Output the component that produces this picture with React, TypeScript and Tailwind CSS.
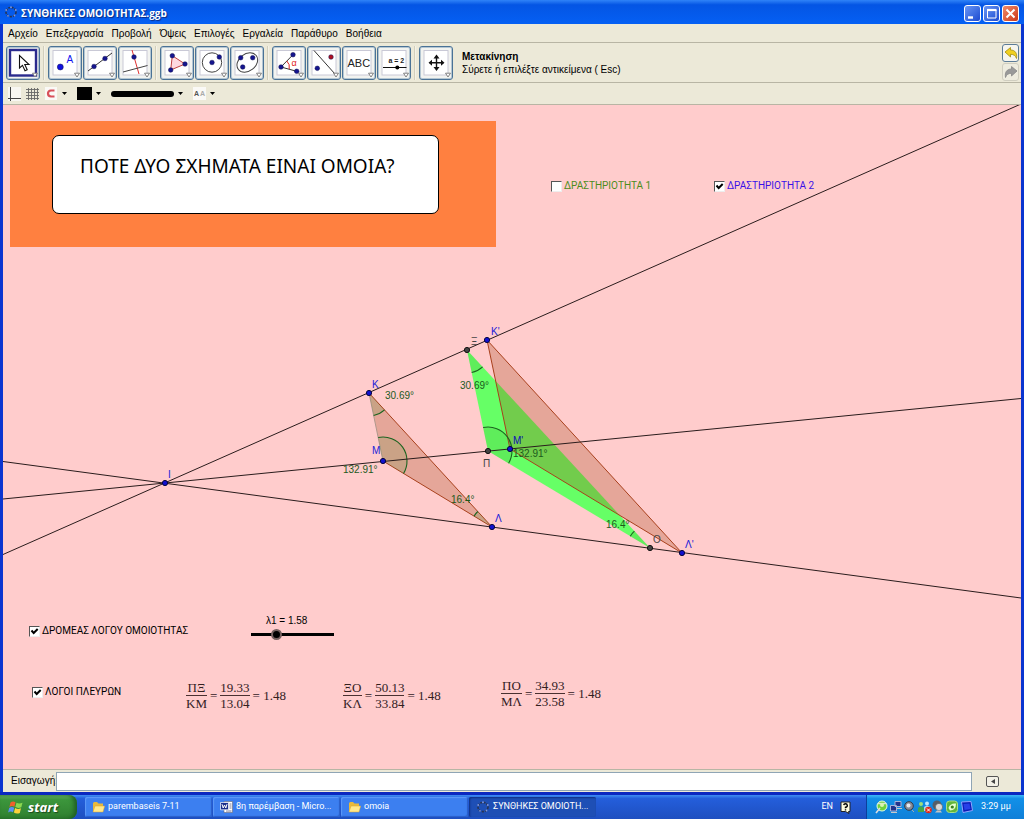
import React, { useState } from "react";

type P = [number, number];

const NAVY = "#15158f";
const BROWN = "#993300";

/* ---------- toolbar ---------- */

function Dot({ x, y, r = 2.3, c = NAVY }: { x: number; y: number; r?: number; c?: string }) {
  return <circle cx={x} cy={y} r={r} fill={c} stroke="#101050" strokeWidth="0.5" />;
}

const toolGroups: { name: string; icon: React.ReactNode }[][] = [
  [
    {
      name: "Μετακίνηση",
      icon: (
        <path
          d="M13.5 9.5V22l3-2.7 2.5 5.4 2.2-1-2.4-5.2h4.2z"
          fill="#fff"
          stroke="#111"
          strokeWidth="1.1"
        />
      ),
    },
  ],
  [
    {
      name: "Σημείο",
      icon: (
        <>
          <Dot x={12.3} y={21} r={3} c="#1010e0" />
          <text x="18.5" y="16.5" fontSize="10" fill="#1010f0">A</text>
        </>
      ),
    },
    {
      name: "Ευθεία",
      icon: (
        <>
          <path d="M5 25 29 7" stroke="#333" />
          <Dot x={11} y={20.5} />
          <Dot x={22} y={12.5} />
        </>
      ),
    },
    {
      name: "Κάθετη ευθεία",
      icon: (
        <>
          <path d="M14 4 21 28" stroke="#e03030" />
          <path d="M5 26 29.5 19.5" stroke="#444" />
          <Dot x={16} y={11} />
        </>
      ),
    },
  ],
  [
    {
      name: "Πολύγωνο",
      icon: (
        <>
          <path d="M12.3 9.7 25 18 10.7 24z" fill="#ffd8e0" stroke="#c04040" />
          <Dot x={12.3} y={9.7} />
          <Dot x={25} y={18} />
          <Dot x={10.7} y={24} />
        </>
      ),
    },
    {
      name: "Κύκλος",
      icon: (
        <>
          <circle cx="17" cy="16.5" r="9.7" fill="none" stroke="#444" />
          <Dot x={17} y={16.5} />
          <Dot x={24.3} y={11} />
        </>
      ),
    },
    {
      name: "Έλλειψη",
      icon: (
        <>
          <ellipse cx="17.3" cy="16.5" rx="11.3" ry="8.5" fill="none" stroke="#444" transform="rotate(-38 17.3 16.5)" />
          <Dot x={10.7} y={11.7} />
          <Dot x={22.7} y={11.7} />
          <Dot x={12.7} y={21} />
        </>
      ),
    },
  ],
  [
    {
      name: "Γωνία",
      icon: (
        <>
          <path d="M21 8.7 9 21 24.7 25.3" fill="none" stroke="#333" />
          <path d="M14.8 15A8.5 8.5 0 0 1 17.2 23" fill="none" stroke="#e02020" />
          <text x="19.5" y="19.5" fontSize="9" fill="#e02020">α</text>
          <Dot x={21} y={8.7} />
          <Dot x={9} y={21} />
          <Dot x={24.7} y={25.3} />
        </>
      ),
    },
    {
      name: "Ανάκλαση",
      icon: (
        <>
          <path d="M7 4.5 28 28" stroke="#333" />
          <Dot x={10.3} y={22.3} />
          <Dot x={24} y={11} c="#b01020" />
        </>
      ),
    },
    { name: "Κείμενο", icon: <text x="5.5" y="20.5" fontSize="11" fill="#222">ABC</text> },
    {
      name: "Δρομέας",
      icon: (
        <>
          <text x="11.5" y="17" fontSize="7" fontWeight="bold" fill="#222">a = 2</text>
          <path d="M6 21.5H29.5" stroke="#111" />
          <circle cx="20.3" cy="21.5" r="2" fill="#000" />
        </>
      ),
    },
  ],
  [
    {
      name: "Μετακίνηση σχεδίου",
      icon: (
        <>
          <path d="M17.5 10.5V23M11 16.7H24" stroke="#111" strokeWidth="1.4" />
          <path d="M17.5 8.5 14.5 12.5H20.5zM17.5 25 14.5 21H20.5zM9.5 16.7 13 13.7V19.7zM25.5 16.7 22 13.7V19.7z" fill="#111" />
        </>
      ),
    },
  ],
];

function ToolButton({ name, icon, active }: { name: string; icon: React.ReactNode; active: boolean }) {
  return (
    <button
      aria-label={name}
      aria-pressed={active}
      className="h-[34px] w-[34px] shrink-0 overflow-hidden rounded-[3px] border border-[#4a7296] bg-[#f2f3f0] shadow-[inset_0_0_0_1px_#b4c6d2]"
    >
      <svg viewBox="0 0 34 33" className="-m-px h-[33px] w-[34px] font-['Liberation_Sans',sans-serif]">
        <rect
          x={active ? 4 : 5}
          y={active ? 4 : 4.5}
          width={active ? 26 : 24}
          height={active ? 25.5 : 24.5}
          fill="#fff"
          stroke={active ? "#2b2b8e" : "#c9c9d6"}
          strokeWidth={active ? 2.4 : 1}
        />
        {icon}
        <path d="M26.5 27.2H31.5L29 31z" fill="#fff" stroke="#777" strokeWidth="0.9" />
      </svg>
    </button>
  );
}

function Caret() {
  return (
    <svg viewBox="0 0 5 3" className="h-[3px] w-[5px]">
      <path d="M0 0H5L2.5 3z" fill="#000" />
    </svg>
  );
}

function RingLogo() {
  return (
    <svg viewBox="0 0 14 14" className="h-[14px] w-[14px] shrink-0">
      <ellipse cx="7" cy="7" rx="5" ry="4.6" fill="none" stroke="#2a3550" strokeWidth="1.6" strokeDasharray="2.2 1" />
      {[[2.2, 5], [7, 2.2], [11.8, 5], [10.5, 10.5], [4, 10.8]].map(([x, y]) => (
        <circle key={x} cx={x} cy={y} r="0.9" fill="#8098e0" />
      ))}
    </svg>
  );
}

function ArrowIcon({ fill, stroke, flip }: { fill: string; stroke: string; flip?: boolean }) {
  return (
    <svg viewBox="0 0 16 16" className={flip ? "h-4 w-4 -scale-x-100" : "h-4 w-4"}>
      <path d="M2 7 7.5 2.5V5C12 5 14.5 8 13.5 13.5 12.5 10.5 10.5 9.3 7.5 9.3V12z" fill={fill} stroke={stroke} strokeWidth="0.8" />
    </svg>
  );
}

/* ---------- geometry ---------- */

const I: P = [165, 483];
const K: P = [369, 393];
const M: P = [383, 461];
const L: P = [492, 527];
const K2: P = [487, 340];
const M2: P = [510, 449];
const L2: P = [682, 553];
const XI: P = [467, 350];
const PI: P = [488, 451];
const O: P = [650, 548];

const pts = (...p: P[]) => p.map((q) => q.join(",")).join(" ");

function Angle({ at, from, to, r }: { at: P; from: P; to: P; r: number }) {
  const on = (p: P): P => {
    const d = Math.hypot(p[0] - at[0], p[1] - at[1]);
    return [at[0] + ((p[0] - at[0]) * r) / d, at[1] + ((p[1] - at[1]) * r) / d];
  };
  const a = on(from);
  const b = on(to);
  const cross = (a[0] - at[0]) * (b[1] - at[1]) - (a[1] - at[1]) * (b[0] - at[0]);
  const arc = `${a.join(" ")} A${r} ${r} 0 0 ${cross > 0 ? 1 : 0} ${b.join(" ")}`;
  return (
    <>
      <path d={`M${at.join(" ")} L${arc}z`} fill="#3c8c28" fillOpacity="0.16" />
      <path d={`M${arc}`} fill="none" stroke="#1c6420" strokeWidth="1.1" />
    </>
  );
}

const labels: [string, number, number, string][] = [
  ["Ι", 168, 478, "#2020d8"],
  ["Κ", 372, 388, "#2020d8"],
  ["Μ", 372, 454, "#2020d8"],
  ["Λ", 495, 522, "#2020d8"],
  ["Κ'", 491, 335, "#2020d8"],
  ["Μ'", 513, 444, "#0c0cb8"],
  ["Λ'", 685, 548, "#2020d8"],
  ["Ξ", 471, 345, "#444"],
  ["Π", 483, 467, "#444"],
  ["Ο", 653, 543, "#444"],
  ["30.69°", 385, 399, "#1c5a1c"],
  ["132.91°", 343, 473, "#1c5a1c"],
  ["16.4°", 451, 503, "#1c5a1c"],
  ["30.69°", 460, 389, "#1c5a1c"],
  ["132.91°", 513, 457, "#1c5a1c"],
  ["16.4°", 606, 528, "#1c5a1c"],
];

function Geometry() {
  return (
    <svg className="absolute inset-0 h-full w-full font-['Liberation_Sans',sans-serif]">
      <g transform="translate(-3 -105)">
        <polygon points={pts(XI, PI, O)} fill="#66ff66" />
        <polygon points={pts(K, M, L)} fill={BROWN} fillOpacity="0.25" />
        <polygon points={pts(K2, M2, L2)} fill={BROWN} fillOpacity="0.25" stroke="#a8401c" />
        <polyline points={pts(K, L, M)} fill="none" stroke="#a8401c" />
        <polyline points={pts(K, M)} fill="none" stroke="#b0988c" />
        <Angle at={K} from={M} to={L} r={23} />
        <Angle at={M} from={K} to={L} r={24} />
        <Angle at={L} from={K} to={M} r={21} />
        <Angle at={XI} from={PI} to={O} r={23} />
        <Angle at={PI} from={XI} to={O} r={24} />
        <Angle at={O} from={XI} to={PI} r={23} />
        <g stroke="#2a1c1c" strokeWidth="1">
          <path d="M3 554.5 1021 104" />
          <path d="M3 499 1021 398.5" />
          <path d="M3 461.500 1021 598" />
        </g>
        {[I, K, M, L, K2, M2, L2].map(([x, y]) => (
          <circle key={x} cx={x} cy={y} r="2.6" fill="#1010d0" stroke="#050540" />
        ))}
        {[XI, PI, O].map(([x, y]) => (
          <circle key={x} cx={x} cy={y} r="2.6" fill="#444" stroke="#111" />
        ))}
        {labels.map(([t, x, y, c]) => (
          <text key={t + x} x={x} y={y} fontSize="10" fill={c}>{t}</text>
        ))}
      </g>
    </svg>
  );
}

function Check({ label, on, place, tone }: { label: string; on?: boolean; place: string; tone: string }) {
  const [checked, setChecked] = useState(!!on);
  return (
    <label className={`absolute flex items-center gap-[2px] whitespace-nowrap font-['Roboto',sans-serif] text-[10px] leading-3 ${place} ${tone}`}>
      <span className="grid h-[11px] w-[11px]">
        <input
          type="checkbox"
          checked={checked}
          onChange={(e) => setChecked(e.target.checked)}
          className="col-start-1 row-start-1 h-[11px] w-[11px] appearance-none border border-t-[#555] border-r-[#eee] border-b-[#eee] border-l-[#555] bg-white"
        />
        {checked && (
          <svg viewBox="0 0 11 11" className="pointer-events-none col-start-1 row-start-1 h-[11px] w-[11px]">
            <path d="M2.500 4.500 4.700 7 8.700 3" fill="none" stroke="#000" strokeWidth="2" />
          </svg>
        )}
      </span>
      {label}
    </label>
  );
}

function Fraction({ top, bottom }: { top: string; bottom: string }) {
  return (
    <span className="flex flex-col text-center">
      <span className="border-b border-[#4a3030] leading-[15px]">{top}</span>
      <span className="leading-[15px]">{bottom}</span>
    </span>
  );
}

function Ratio({ a, b, c, d, place }: { a: string; b: string; c: string; d: string; place: string }) {
  return (
    <div className={`absolute flex items-center gap-[3px] whitespace-nowrap font-['Liberation_Serif',serif] text-[13px] text-[#33201f] ${place}`}>
      <Fraction top={a} bottom={b} />
      <span>=</span>
      <Fraction top={c} bottom={d} />
      <span>= 1.48</span>
    </div>
  );
}

/* ---------- taskbar ---------- */

function Folder() {
  return (
    <svg viewBox="0 0 13 12" className="h-3 w-[13px] shrink-0">
      <path d="M1 2.500Q1 1 2.500 1H5L6.500 2.500H11V10.500H1z" fill="#e8b93c" />
      <path d="M1 11 3 5H12.700L11 11z" fill="#ffe88c" stroke="#d9a52c" strokeWidth="0.5" />
    </svg>
  );
}

function Word() {
  return (
    <svg viewBox="0 0 13 12" className="h-3 w-[13px] shrink-0">
      <path d="M4 0.500H12.500V11.500H4z" fill="#fff" stroke="#667" strokeWidth="0.6" />
      <path d="M9.500 3H11.500M9.500 5H11.500M9.500 7H11.500M6 10H11.500" stroke="#557" strokeWidth="0.8" />
      <path d="M0.500 1.500H8.500V8.800H0.500z" fill="#1c2f8c" stroke="#fff" strokeWidth="0.7" />
      <path d="M2 3.200 3.200 7 4.500 4 5.800 7 7 3.200" fill="none" stroke="#fff" />
    </svg>
  );
}

const tasks = [
  { text: "parembaseis 7-11", icon: <Folder />, active: false },
  { text: "8η παρέμβαση - Micro...", icon: <Word />, active: false },
  { text: "omoia", icon: <Folder />, active: false },
  { text: "ΣΥΝΘΗΚΕΣ ΟΜΟΙΟΤΗ...", icon: <RingLogo />, active: true },
];

function TrayIcons() {
  return (
    <svg viewBox="0 0 100 14" className="h-[14px] w-[100px] shrink-0">
      <circle cx="7" cy="6" r="5" fill="#6fd23c" stroke="#e8ffe0" />
      <path d="M1 13 5 8M3 3.500H11" stroke="#ddd" strokeWidth="1.600" />
      <circle cx="7" cy="5" r="2" fill="#d8f5b0" />
      <path d="M20 1.500H26V6.500H20zM15.500 5.500H21.500V11H15.500z" fill="#22338c" stroke="#a9b4d8" />
      <path d="M16 12.500H22M22 8.500H27" stroke="#c8c8c8" />
      <circle cx="34" cy="6" r="4.300" fill="#878d98" stroke="#333a48" />
      <circle cx="33.500" cy="5.500" r="2" fill="#e5e7ee" />
      <path d="M37 10 39 12" stroke="#aaa" />
      <circle cx="46" cy="4" r="2" fill="#9ee07a" />
      <circle cx="52" cy="3.500" r="2" fill="#b9e6ff" />
      <path d="M43 12V8Q46 4.500 49 8V12z" fill="#42a848" />
      <path d="M49 11V7Q52 4 55 7V11z" fill="#a8d8ee" />
      <circle cx="53.500" cy="10" r="3.300" fill="#e02818" />
      <path d="M52 8.500 55 11.500M55 8.500 52 11.500" stroke="#fff" />
      <circle cx="62" cy="5" r="4.500" fill="#565e68" />
      <circle cx="64" cy="7" r="3.600" fill="#d8d8d8" stroke="#555" strokeWidth="0.600" />
      <path d="M60 12.500H67L65.500 10.500H62z" fill="#c4c4c4" />
      <rect x="71.500" y="1" width="11" height="11.500" rx="3" fill="#62b63a" stroke="#a8e088" />
      <path d="M73.500 8Q75 3 81 3.500 81 10.500 75 10.500z" fill="#e5ffd0" />
      <circle cx="77.300" cy="7" r="1.600" fill="#388020" />
      <path d="M86.500 2 96 1.500 97.500 10.500 88 12.500z" fill="#0c1db8" stroke="#8fa3ff" />
      <path d="M88.500 4 94.500 3.500 95.500 9 89.500 10z" fill="#2840e8" />
    </svg>
  );
}

const menus = ["Αρχείο", "Επεξεργασία", "Προβολή", "Όψεις", "Επιλογές", "Εργαλεία", "Παράθυρο", "Βοήθεια"];

export default function App() {
  const [lambda, setLambda] = useState("1.58");
  return (
    <div className="flex h-screen flex-col overflow-hidden bg-[#0a35d0] font-['Liberation_Sans',sans-serif] text-black">
      <header className="flex h-6 shrink-0 items-center gap-[3px] bg-linear-to-b from-[#2f83f8] via-[#0455e4] via-20% to-[#0560f4] pl-1 pr-[5px]">
        <RingLogo />
        <h1 className="flex-1 pt-[2px] font-['Open_Sans',sans-serif] text-[10px] font-bold leading-4 text-white [text-shadow:1px_1px_1px_#0a2a80]">
          ΣΥΝΘΗΚΕΣ ΟΜΟΙΟΤΗΤΑΣ.ggb
        </h1>
        <div className="flex gap-[2px] pt-[3px]">
          <button aria-label="Ελαχιστοποίηση" className="h-[17px] w-[17px] rounded-[3px] border border-white bg-linear-to-br from-[#6a96f5] to-[#1d48d0]">
            <svg viewBox="0 0 15 15" className="h-[15px] w-[15px]"><path d="M3 11.500H8" stroke="#fff" strokeWidth="2.400" /></svg>
          </button>
          <button aria-label="Μεγιστοποίηση" className="h-[17px] w-[17px] rounded-[3px] border border-white bg-linear-to-br from-[#6a96f5] to-[#1d48d0]">
            <svg viewBox="0 0 15 15" className="h-[15px] w-[15px]">
              <path d="M3.500 4V12H12V4" fill="none" stroke="#fff" />
              <path d="M3 4H12.500" stroke="#fff" strokeWidth="2.200" />
            </svg>
          </button>
          <button aria-label="Κλείσιμο" className="h-[17px] w-[17px] rounded-[3px] border border-white bg-linear-to-br from-[#f08a68] to-[#cc3312]">
            <svg viewBox="0 0 15 15" className="h-[15px] w-[15px]"><path d="M3.500 3.500 11.500 11.500M11.500 3.500 3.500 11.500" stroke="#fff" strokeWidth="2" /></svg>
          </button>
        </div>
      </header>

      <div className="mx-[3px] flex min-h-0 flex-1 flex-col bg-[#ece9d8]">
        <nav className="flex h-[19px] shrink-0 items-center gap-2 border-b border-[#b8b5a4] pl-[5px] pt-px text-[10px] leading-3">
          {menus.map((m) => (
            <button key={m}>{m}</button>
          ))}
        </nav>

        <div className="flex h-10 shrink-0 items-center border-b border-[#b8b5a4] pl-[3px] pr-[2px]">
          {toolGroups.map((g, i) => (
            <div key={i} className="flex items-center">
              {i > 0 && <div className="mx-[3px] h-[34px] w-[2px] border-l border-[#d2cfbd] bg-[#f4f2e8]" />}
              <div className="flex gap-px">
                {g.map((t) => (
                  <ToolButton key={t.name} name={t.name} icon={t.icon} active={i === 0} />
                ))}
              </div>
            </div>
          ))}
          <div className="flex-1 pl-[9px] pt-px text-[10px] leading-[13px]">
            <p className="font-bold">Μετακίνηση</p>
            <p>Σύρετε ή επιλέξτε αντικείμενα ( Esc)</p>
          </div>
          <div className="flex flex-col gap-px">
            <button aria-label="Αναίρεση" className="grid h-[18px] w-[17px] place-items-center rounded-[3px] border border-[#5c7c98] bg-[#f6f5ee]">
              <ArrowIcon fill="#f0d020" stroke="#a08a10" />
            </button>
            <button aria-label="Επανάληψη" className="grid h-[18px] w-[17px] place-items-center rounded-[3px] border border-[#d0cec0] bg-[#eeecdf]">
              <ArrowIcon fill="#999" stroke="#888" flip />
            </button>
          </div>
        </div>

        <div className="flex h-[22px] shrink-0 items-center border-b border-[#b8b5a4] pl-[5px]">
          <button aria-label="Άξονες" className="h-[14px] w-[13px] bg-[#f8f7f2]">
            <svg viewBox="0 0 13 14" className="h-[14px] w-[13px]"><path d="M2.500 0V14M0 11.500H13" stroke="#444" /></svg>
          </button>
          <button aria-label="Πλέγμα" className="ml-[5px] h-[14px] w-[14px]">
            <svg viewBox="0 0 14 14" className="h-[14px] w-[14px]"><path d="M2.500 1V13M5.500 1V13M8.500 1V13M11.500 1V13M0 2.500H13M0 5.500H13M0 8.500H13M0 11.500H13" stroke="#666" strokeWidth="0.900" /></svg>
          </button>
          <button aria-label="Σύλληψη σημείου" className="ml-[5px] flex h-[13px] items-center gap-[5px]">
            <svg viewBox="0 0 12 13" className="h-[13px] w-3 bg-[#faf9f6]">
              <path d="M9.500 3.500H6Q3 3.700 3 6.500T6 9.500H9.500" fill="none" stroke="#d8505a" strokeWidth="2.200" />
            </svg>
            <Caret />
          </button>
          <button aria-label="Χρώμα" className="ml-[10px] flex items-center gap-[4px]">
            <span className="h-[13px] w-[15px] bg-black" />
            <Caret />
          </button>
          <button aria-label="Πάχος γραμμής" className="ml-[10px] flex items-center gap-[4px]">
            <span className="h-[6px] w-[63px] rounded-full bg-black" />
            <Caret />
          </button>
          <button aria-label="Μέγεθος κειμένου" className="ml-[10px] flex items-center gap-[4px]">
            <span className="flex h-[13px] w-[13px] items-center justify-center gap-px bg-[#faf9f6] text-[7px] font-bold leading-none text-[#555]">
              <span>A</span>
              <span className="text-[#aaa]">A</span>
            </span>
            <Caret />
          </button>
        </div>

        <main className="relative min-h-0 flex-1 overflow-hidden bg-[#ffcccc]">
          <div className="absolute left-[7px] top-4 h-[126px] w-[486px] bg-[#ff8040] px-[42px] pt-[14px]">
            <div className="h-[79px] w-[387px] rounded-[7px] border border-black bg-white px-[27px] pt-4">
              <p className="whitespace-nowrap font-['Comic_Sans_MS','Noto_Sans',sans-serif] text-[19px] leading-[28px]">
                ΠΟΤΕ ΔΥΟ ΣΧΗΜΑΤΑ ΕΙΝΑΙ ΟΜΟΙΑ?
              </p>
            </div>
          </div>

          <Geometry />

          <Check label="ΔΡΑΣΤΗΡΙΟΤΗΤΑ 1" place="left-[548px] top-[75px]" tone="text-[#4c8c1c]" />
          <Check label="ΔΡΑΣΤΗΡΙΟΤΗΤΑ 2" on place="left-[711px] top-[75px]" tone="text-[#3a10e8]" />
          <Check label="ΔΡΟΜΕΑΣ ΛΟΓΟΥ ΟΜΟΙΟΤΗΤΑΣ" on place="left-[26px] top-[520px]" tone="text-black" />
          <Check label="ΛΟΓΟΙ ΠΛΕΥΡΩΝ" on place="left-[29px] top-[581px]" tone="text-black" />

          <div className="absolute left-[242px] top-[509px] flex w-[94px] flex-col">
            <label htmlFor="ratio" className="pl-[21px] text-[10px] leading-[14px]">λ1 = {lambda}</label>
            <input
              id="ratio"
              type="range"
              min="0"
              max="5"
              step="0.01"
              value={lambda}
              onChange={(e) => setLambda(e.target.value)}
              className="h-3 w-full appearance-none bg-transparent bg-[linear-gradient(#000,#000)] bg-[length:83px_3px] bg-center bg-no-repeat [&::-webkit-slider-thumb]:h-[11px] [&::-webkit-slider-thumb]:w-[11px] [&::-webkit-slider-thumb]:appearance-none [&::-webkit-slider-thumb]:rounded-full [&::-webkit-slider-thumb]:border-2 [&::-webkit-slider-thumb]:border-[#75605f] [&::-webkit-slider-thumb]:bg-black"
            />
          </div>

          <Ratio a="ΠΞ" b="ΚΜ" c="19.33" d="13.04" place="left-[183px] top-[575px]" />
          <Ratio a="ΞΟ" b="ΚΛ" c="50.13" d="33.84" place="left-[340px] top-[575px]" />
          <Ratio a="ΠΟ" b="ΜΛ" c="34.93" d="23.58" place="left-[498px] top-[573px]" />
        </main>

        <form className="flex h-[23px] shrink-0 items-center border-t border-[#b8b5a4] pl-2" onSubmit={(e) => e.preventDefault()}>
          <label htmlFor="cmd" className="w-[45px] shrink-0 whitespace-nowrap text-[10px] leading-3">Εισαγωγή:</label>
          <input id="cmd" type="text" className="h-[19px] min-w-0 flex-1 border border-[#8fa5b5] bg-white px-1 text-[11px] outline-none" />
          <button type="button" aria-label="Βοήθεια εισαγωγής" className="ml-[14px] mr-[22px] grid h-[11px] w-[13px] place-items-center rounded-[2px] border border-[#555] bg-[#f2f0e6]">
            <svg viewBox="0 0 4 5" className="h-[5px] w-1"><path d="M4 0V5L0 2.500z" fill="#444" /></svg>
          </button>
        </form>
      </div>
      <div className="h-[3px] shrink-0 bg-[#0a28c0]" />

      <footer className="flex h-6 shrink-0 items-stretch bg-linear-to-b from-[#3f8cf2] via-[#245edb] via-15% to-[#1e4fc0] font-['Roboto',sans-serif] text-[9px] text-white">
        <button className="mr-2 flex w-[77px] shrink-0 items-center gap-1 rounded-r-[8px] bg-linear-to-b from-[#6cb56a] via-[#3c963c] via-20% to-[#2f7f2f] pl-2 shadow-[inset_-3px_0_4px_#1f5f24]">
          <svg viewBox="0 0 16 15" className="h-[15px] w-4">
            <path d="M2.500 2.500Q5 0.800 7.500 2.300L6.400 6.700Q4 5.300 1.400 6.900z" fill="#f0602c" />
            <path d="M8.500 2.700Q11 4.300 14.500 2.800L13.300 7.300Q10 8.600 7.300 7.100z" fill="#8cd850" />
            <path d="M1.200 7.900Q3.800 6.400 6.200 7.800L5 12.300Q2.600 10.800 0.100 12.500z" fill="#5a90f5" />
            <path d="M7.100 8.100Q10 9.700 13 8.300L11.800 12.900Q8.700 14.200 5.900 12.600z" fill="#fbd23c" />
          </svg>
          <span className="font-['Open_Sans',sans-serif] text-[13px] font-bold italic leading-4 [text-shadow:1px_1px_1px_#1b4a1b]">start</span>
        </button>
        <div className="flex min-w-0 flex-1 gap-px">
          {tasks.map((t) => (
            <button
              key={t.text}
              className={
                t.active
                  ? "my-[2px] flex w-[127px] items-center gap-[3px] whitespace-nowrap rounded-[2px] bg-[#1e4fb5] pl-[7px] shadow-[inset_1px_1px_2px_#0f2f80]"
                  : "my-[2px] flex w-[127px] items-center gap-[3px] whitespace-nowrap rounded-[2px] bg-[#3c7ff0] pl-[7px] shadow-[inset_-1px_-1px_1px_#2a5fc8,inset_1px_1px_1px_#5c9af8]"
              }
            >
              {t.icon}
              {t.text}
            </button>
          ))}
        </div>
        <div className="flex items-center gap-[7px] pr-[15px]">
          <span>EN</span>
          <svg viewBox="0 0 11 13" className="h-[13px] w-[11px]">
            <path d="M1 1H10V10.500H8.500L9 12.500 5.500 10.500H1z" fill="#fffde0" stroke="#222" />
            <path d="M3.700 4.200Q3.900 2.700 5.500 2.700T7.300 4.300 5.500 6.300V7.200M5.500 8.300V9.600" fill="none" stroke="#000" strokeWidth="1.400" />
          </svg>
        </div>
        <div className="flex w-[158px] shrink-0 items-center gap-[6px] border-l border-[#0c3f9c] bg-linear-to-b from-[#3cb8f8] via-[#1290e8] via-15% to-[#0f7fd8] pl-2">
          <TrayIcons />
          <time className="whitespace-nowrap">3:29 μμ</time>
        </div>
      </footer>
    </div>
  );
}
